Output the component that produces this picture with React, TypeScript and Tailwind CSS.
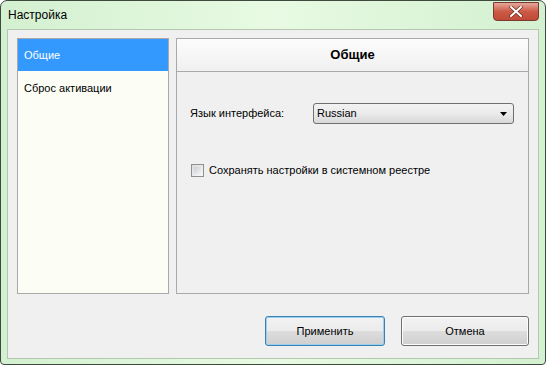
import React from "react";

export default function App() {
  return (
    <div className="w-[546px] h-[365px] bg-white" style={{ fontFamily: '"Liberation Sans", Arial, sans-serif' }}>
      <div className="w-[546px] h-[365px] rounded-t-[7px] rounded-b-[4px] border border-[#3f4a3f] bg-gradient-to-r from-[#d3f0d0] via-[#e8fae3] to-[#d3f0d0] flex flex-col px-[6px] pb-[5px]">
        <div className="h-[28px] flex items-start justify-between shrink-0">
          <div className="text-[12px] text-black pl-[1px] pt-[8px] leading-none">Настройка</div>
          <div className="mt-[1px] mr-[0px] w-[46px] h-[19px] rounded-b-[4px] border border-[#7a3a30] bg-gradient-to-b from-[#e3a89c] via-[#cc5a46] to-[#c04a36] flex items-center justify-center">
            <svg width="14" height="11" viewBox="0 0 14 11">
              <path d="M2 1 L12 10 M12 1 L2 10" stroke="#6a2a20" strokeWidth="3.4" strokeLinecap="round" />
              <path d="M2 1 L12 10 M12 1 L2 10" stroke="#ffffff" strokeWidth="2" strokeLinecap="round" />
            </svg>
          </div>
        </div>
        <div className="flex-1 border border-[#b4c8b0] bg-[#f0f0f0] flex flex-col pt-[8px] px-[9px] pb-[12px]">
          <div className="flex gap-[7px] h-[256px]">
            <div className="w-[152px] border border-[#a9a9a9] bg-[#fcfdf5] flex flex-col">
              <div className="h-[32px] bg-[#3399ff] text-white text-[11px] flex items-center pl-[6px]">Общие</div>
              <div className="h-[34px] text-black text-[11px] flex items-center pl-[6px]">Сброс активации</div>
            </div>
            <div className="flex-1 border border-[#a9a9a9] bg-[#f0f0f0] flex flex-col">
              <div className="h-[33px] border-b border-[#a9a9a9] bg-gradient-to-b from-[#fcfcfc] to-[#f0f0f0] flex items-center justify-center text-[13px] font-bold text-black">
                Общие
              </div>
              <div className="flex items-center pl-[13px] mt-[31px]">
                <div className="w-[123px] text-[11px] text-black">Язык интерфейса:</div>
                <div className="w-[201px] h-[21px] rounded-[3px] border border-[#707070] bg-gradient-to-b from-[#f2f2f2] via-[#ebebeb] to-[#d8d8d8] flex items-center justify-between pl-[3px] pr-[6px]">
                  <span className="text-[11px] text-black">Russian</span>
                  <svg width="7" height="4" viewBox="0 0 7 4">
                    <path d="M0 0 H7 L3.5 4 Z" fill="#000" />
                  </svg>
                </div>
              </div>
              <div className="flex items-center pl-[14px] mt-[38px]">
                <div className="w-[13px] h-[13px] border border-[#8e8f8f] bg-gradient-to-br from-[#dcdcdc] to-[#f8f8f8] p-[2px]">
                  <div className="w-full h-full bg-gradient-to-br from-[#cbcfd5] to-[#f3f4f5]" />
                </div>
                <span className="ml-[5px] text-[11px] text-black">Сохранять настройки в системном реестре</span>
              </div>
            </div>
          </div>
          <div className="flex-1" />
          <div className="flex justify-end gap-[16px]">
            <div className="w-[120px] h-[30px] rounded-[3px] border border-[#3c7fb1] bg-[linear-gradient(to_bottom,#f2f2f2_0%,#ebebeb_50%,#dddddd_51%,#cfcfcf_100%)] flex items-center justify-center text-[11px] text-black shadow-[inset_0_0_0_1px_#98d1ef]">
              Применить
            </div>
            <div className="w-[128px] h-[30px] rounded-[3px] border border-[#707070] bg-[linear-gradient(to_bottom,#f2f2f2_0%,#ebebeb_50%,#dddddd_51%,#cfcfcf_100%)] flex items-center justify-center text-[11px] text-black shadow-[inset_0_0_0_1px_#fcfcfc]">
              Отмена
            </div>
          </div>
        </div>
      </div>
    </div>
  );
}
